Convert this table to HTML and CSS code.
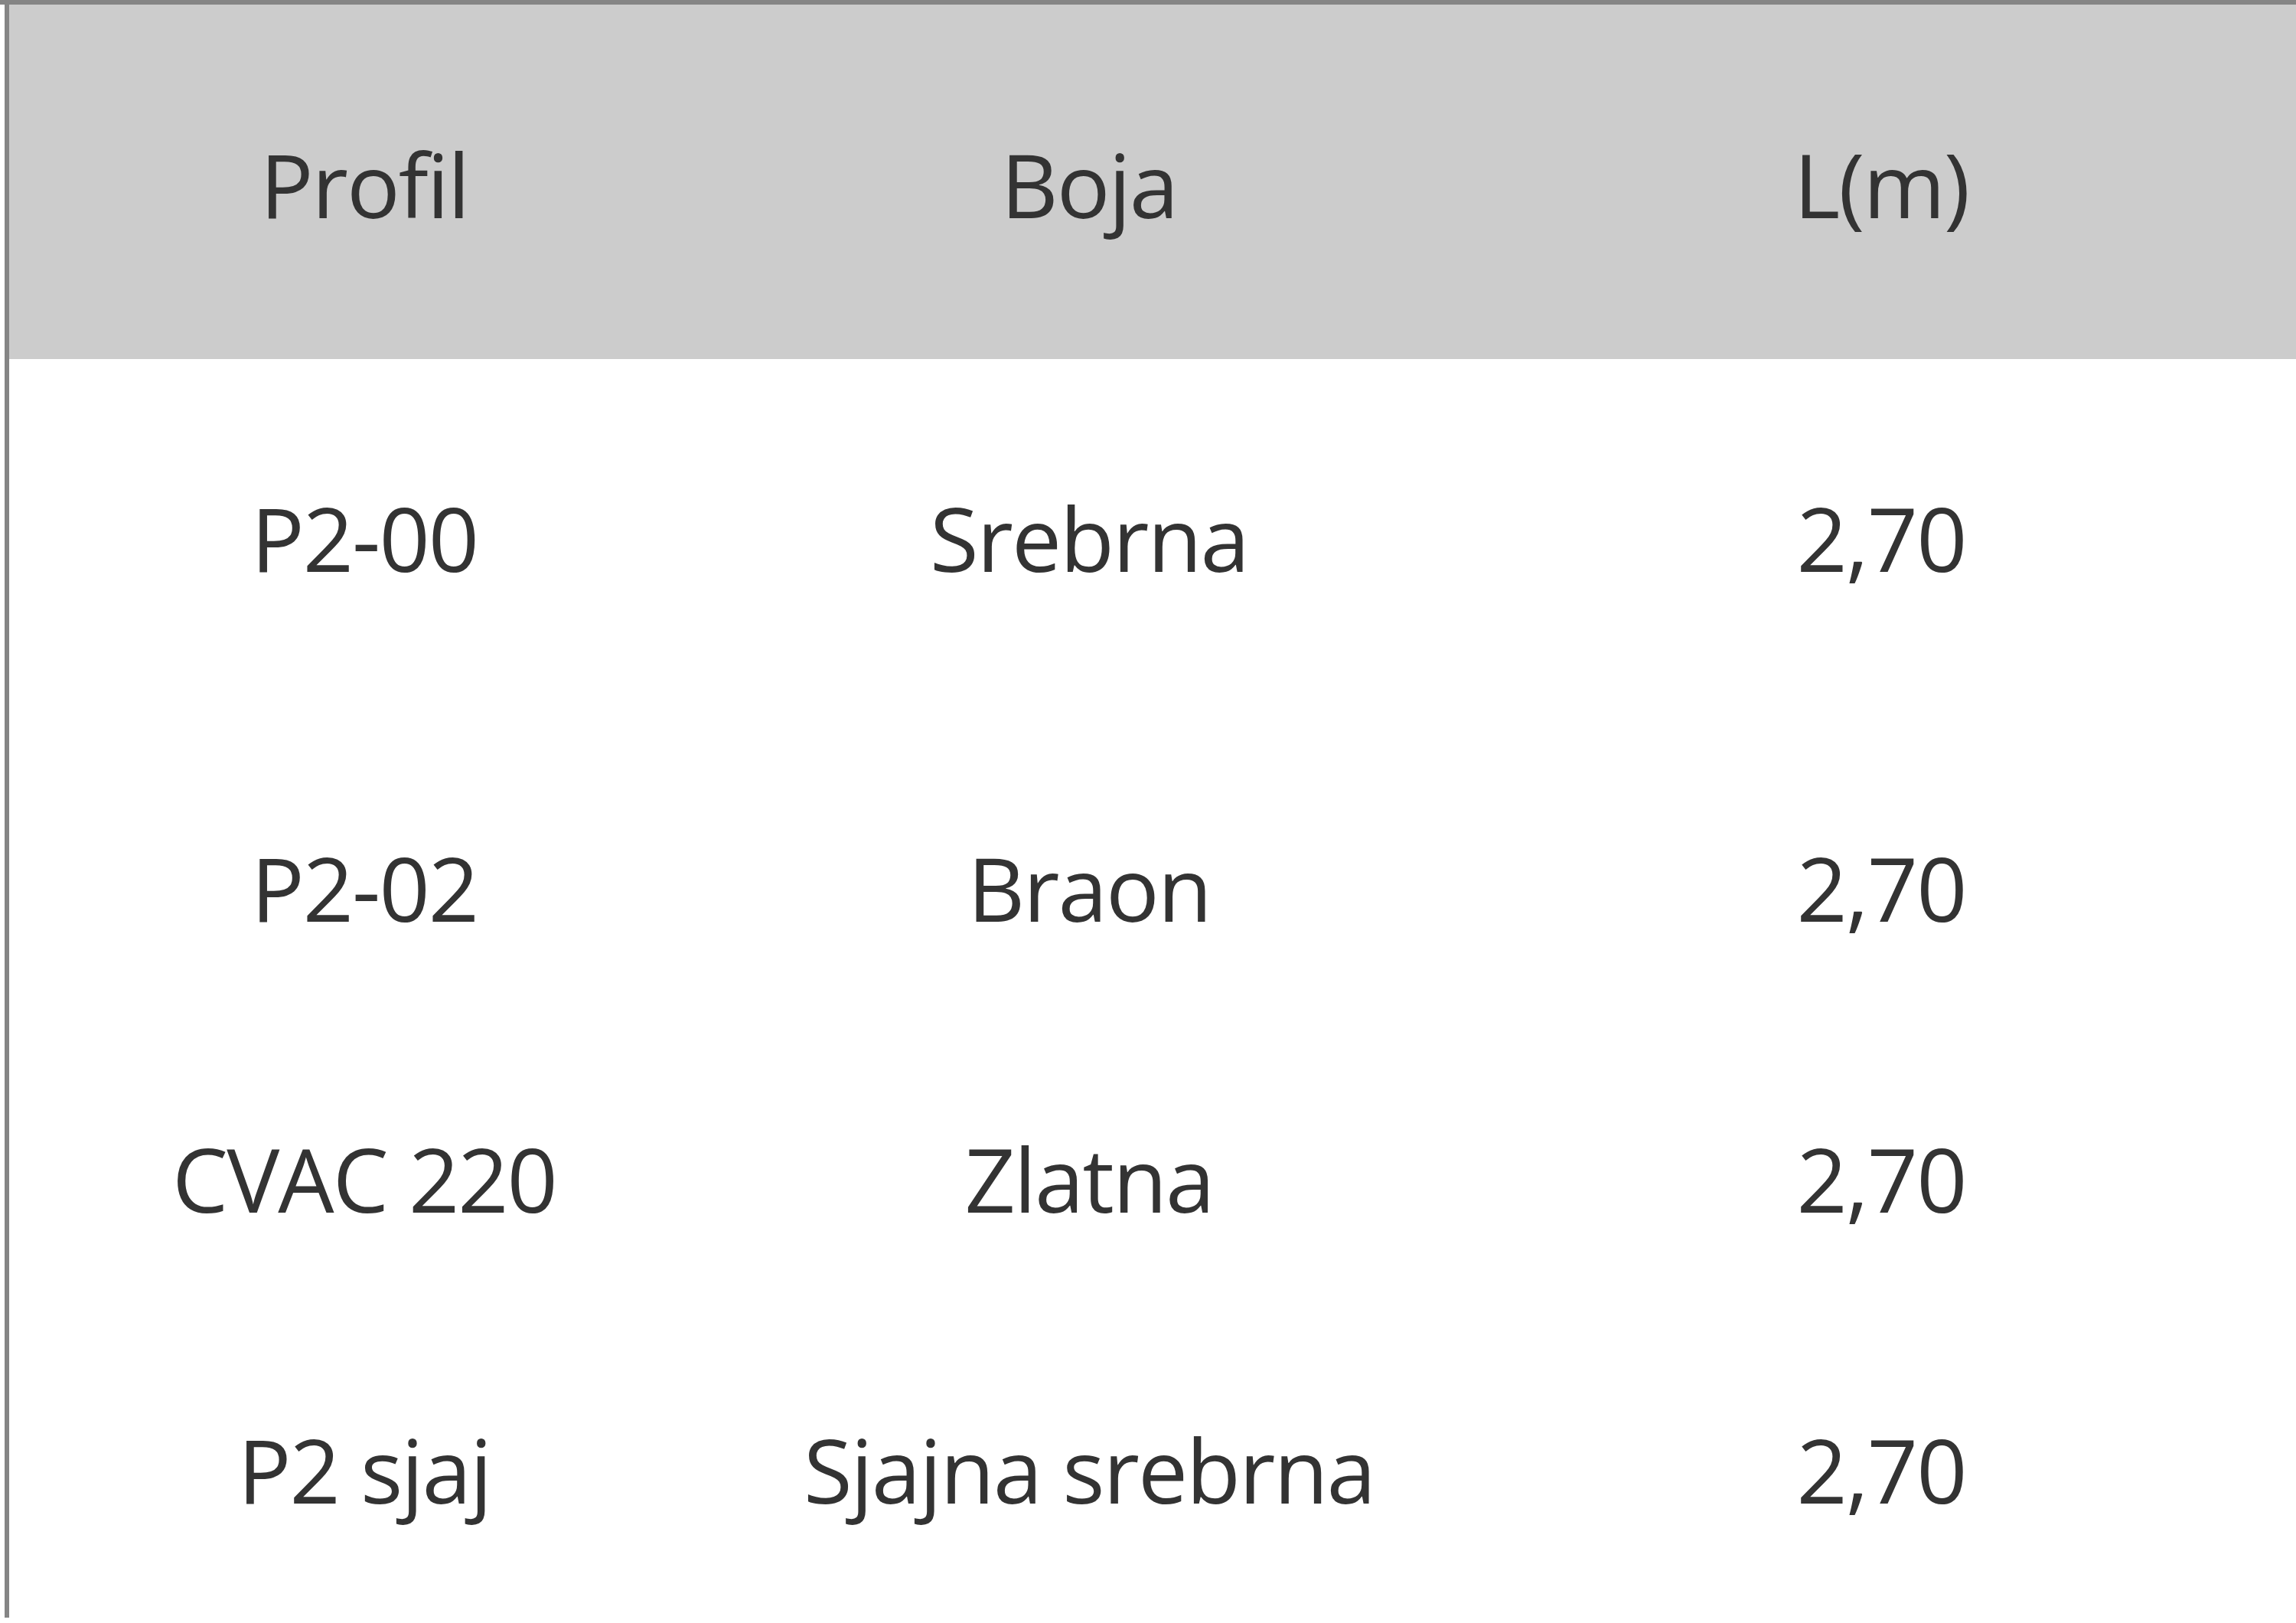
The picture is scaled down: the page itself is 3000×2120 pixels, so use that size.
FILE: index.html
```html
<!DOCTYPE html>
<html lang="sr">
<head>
<meta charset="utf-8">
<title>Profili</title>
<link rel="stylesheet" href="styles.css">
</head>
<body>
<div class="frame">
  <div class="table">
    <div class="row head">
      <div class="cell">Profil</div>
      <div class="cell">Boja</div>
      <div class="cell">L(m)</div>
    </div>
    <div class="row first">
      <div class="cell">P2-00</div>
      <div class="cell">Srebrna</div>
      <div class="cell">2,70</div>
    </div>
    <div class="row">
      <div class="cell">P2-02</div>
      <div class="cell">Braon</div>
      <div class="cell">2,70</div>
    </div>
    <div class="row">
      <div class="cell">CVAC 220</div>
      <div class="cell">Zlatna</div>
      <div class="cell">2,70</div>
    </div>
    <div class="row">
      <div class="cell">P2 sjaj</div>
      <div class="cell">Sjajna srebrna</div>
      <div class="cell">2,70</div>
    </div>
  </div>
</div>
</body>
</html>
```

FILE: styles.css
```css
html, body {
  margin: 0;
  padding: 0;
  background: #ffffff;
}

body {
  width: 3000px;
  height: 2120px;
  overflow: hidden;
  font-family: "Open Sans", "Noto Sans", sans-serif;
  color: #333333;
}

.frame {
  border-top: 6px solid #858585;
  padding-left: 6px;
}

.table {
  border-left: 6px solid #858585;
  display: flex;
  flex-direction: column;
  width: 2998px;
}

.row {
  display: grid;
  grid-template-columns: 928px 966px 1104px;
  height: 380px;
  align-items: center;
  box-sizing: border-box;
  padding-bottom: 8px;
}

.row.head {
  height: 463px;
  background: #cccccc;
  padding-top: 4px;
  padding-bottom: 0;
}

.row.first {
  height: 504px;
  padding-bottom: 38px;
}

.cell {
  text-align: center;
  font-size: 116px;
  line-height: 1.362;
  letter-spacing: -2px;
  white-space: nowrap;
}
```
